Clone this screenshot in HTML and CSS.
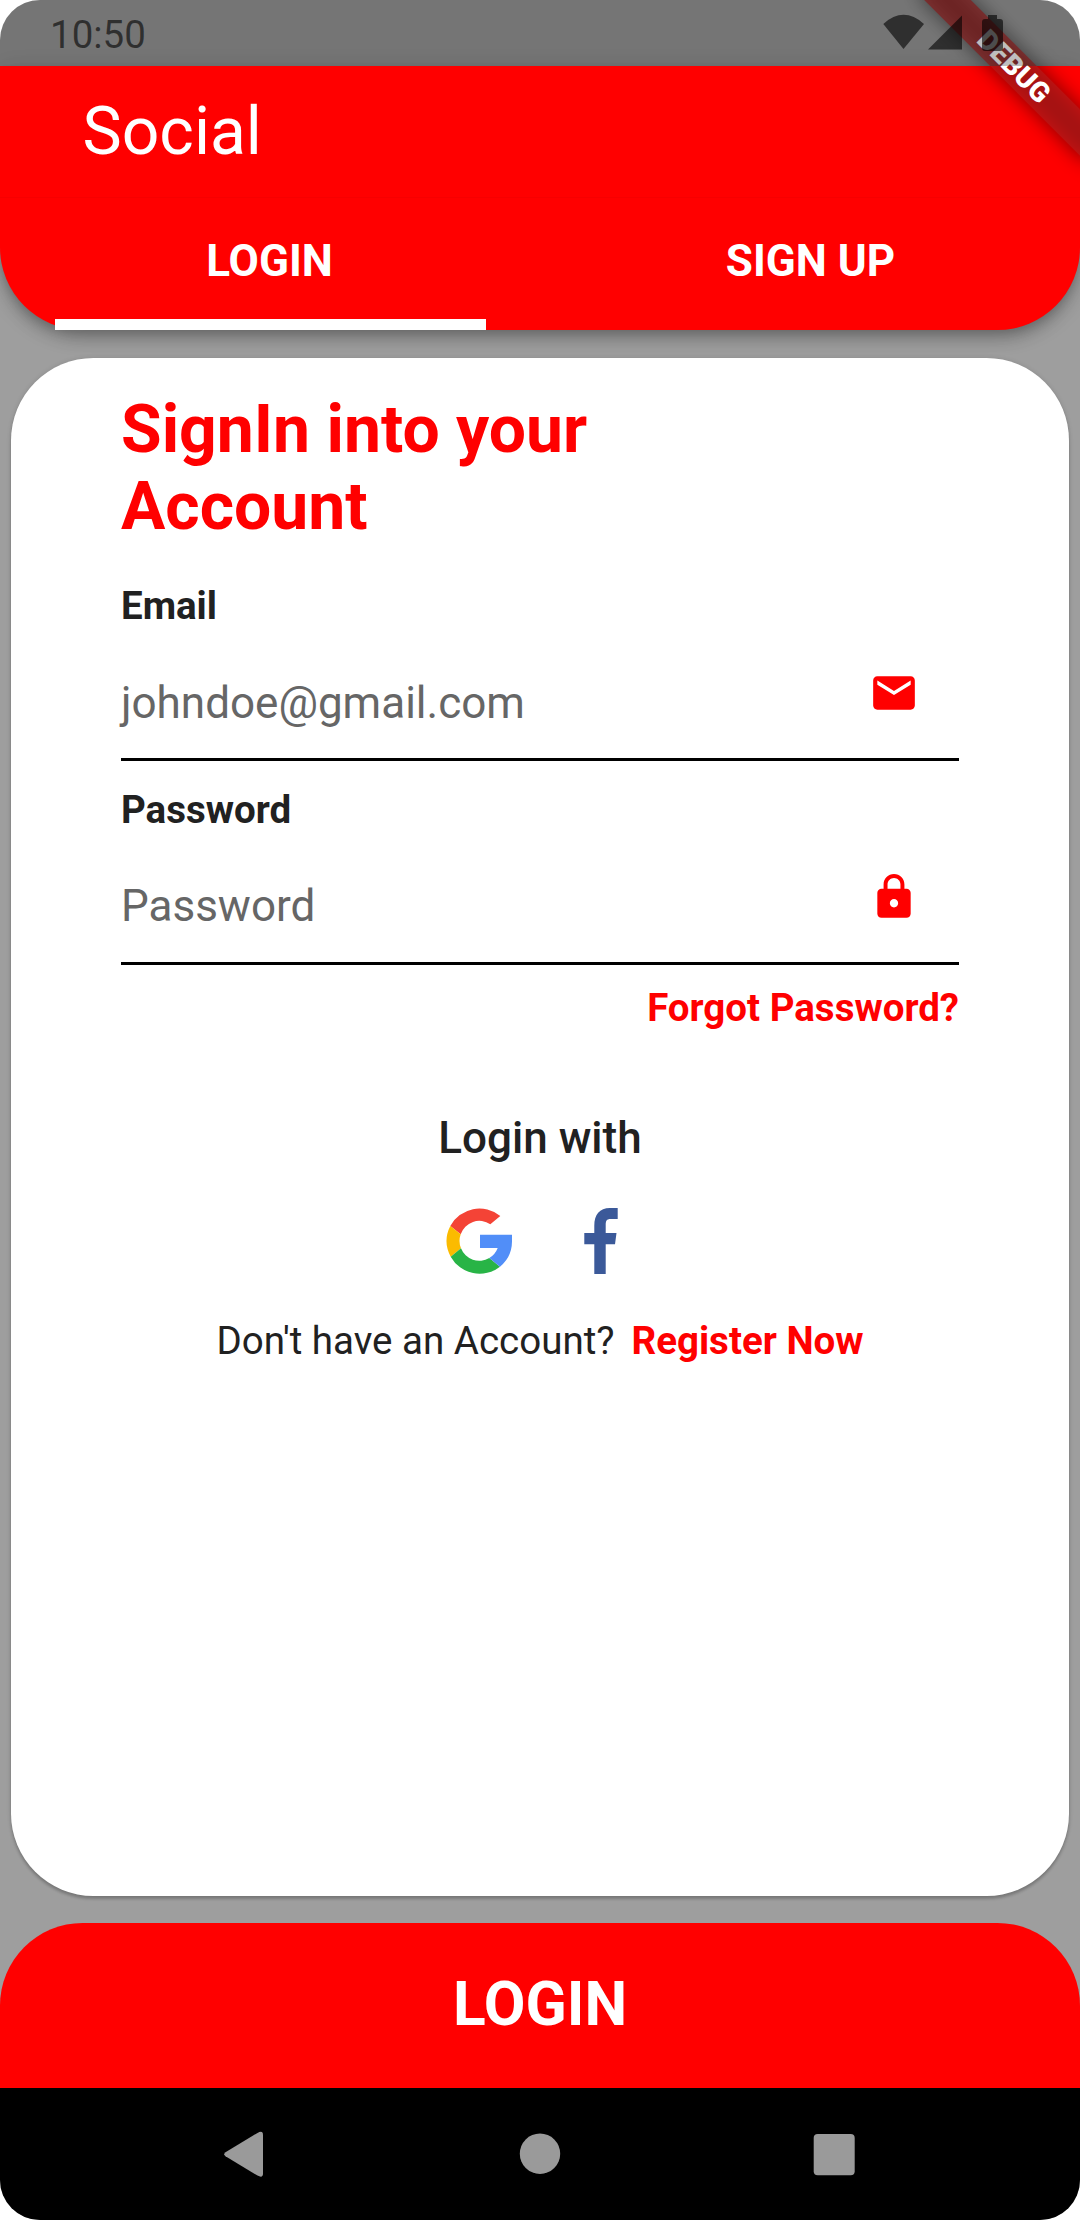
FILE: index.html
```html
<!DOCTYPE html>
<html lang="en">
<head>
<meta charset="utf-8">
<title>Social</title>
<link rel="stylesheet" href="styles.css">
</head>
<body>
<div class="device">
  <header class="app-bar">
    <h1 class="app-title">Social</h1>
    <nav class="tabs">
      <a class="tab tab-active"><span>LOGIN</span></a>
      <a class="tab"><span>SIGN UP</span></a>
    </nav>
  </header>

  <main class="card">
    <h2 class="heading">SignIn into your<br>Account</h2>

    <label class="label">Email</label>
    <div class="field">
      <span class="hint">johndoe@gmail.com</span>
      <svg class="field-icon" viewBox="0 0 24 24"><path d="M20 4H4c-1.1 0-2 .9-2 2v12c0 1.1.9 2 2 2h16c1.1 0 2-.9 2-2V6c0-1.1-.9-2-2-2zm0 4l-8 5-8-5V6l8 5 8-5v2z"/></svg>
    </div>

    <label class="label label-password">Password</label>
    <div class="field">
      <span class="hint hint-password">Password</span>
      <svg class="field-icon" viewBox="0 0 24 24"><path d="M18 8h-1V6c0-2.760-2.240-5-5-5S7 3.240 7 6v2H6c-1.100 0-2 .9-2 2v10c0 1.100.9 2 2 2h12c1.100 0 2-.9 2-2V10c0-1.100-.9-2-2-2zm-6 9c-1.100 0-2-.9-2-2s.9-2 2-2 2 .9 2 2-.9 2-2 2zm3.100-9H8.900V6c0-1.710 1.390-3.100 3.100-3.100s3.100 1.390 3.100 3.100v2z"/></svg>
    </div>
    <a class="forgot">Forgot Password?</a>

    <p class="login-with">Login with</p>
    <div class="socials">
      <svg class="social" viewBox="0 0 66 66">
        <path fill="#f44336" d="M54.300 8A33 33 0 0 0 4.300 18L14.700 26.300A19.500 19.500 0 0 1 44.300 16.300Z"/>
        <path fill="#fbbb00" d="M4.300 18A33 33 0 0 0 4.700 48.700L15 40.300A19.500 19.500 0 0 1 14.700 26.300Z"/>
        <path fill="#28b446" d="M4.700 48.700A33 33 0 0 0 54 58.700L43.300 50A19.500 19.500 0 0 1 15 40.300Z"/>
        <path fill="#518ef8" d="M54 58.700A33 33 0 0 0 66 33V26.800H34V40H51.700A19.500 19.500 0 0 1 43.300 50Z"/>
      </svg>
      <svg class="social" viewBox="0 0 66 66">
        <path fill="#3b5999" d="M26.300 66V36.300H16.300V25H26.300V17.500C26.300 7 31.500 0 42 0H49.700V11H42.500C38.500 11 37.700 13 37.700 17V25H48.500L47 36.300H37.700V66Z"/>
      </svg>
    </div>
    <p class="register"><span>Don't have an Account?</span><a class="register-link">Register Now</a></p>
  </main>

  <button class="submit">LOGIN</button>

  <footer class="system-nav">
    <svg class="nav-icon" viewBox="0 0 48 48"><path d="M3.500 22.200L35.500 2.900Q41 0 41 5V43.500Q41 48.500 35.500 45.600L3.500 26.200Q1 24.200 3.500 22.200Z"/></svg>
    <svg class="nav-icon" viewBox="0 0 48 48"><circle cx="24" cy="23.700" r="20.200"/></svg>
    <svg class="nav-icon" viewBox="0 0 48 48"><rect x="3.700" y="4" width="41" height="41.300" rx="4"/></svg>
  </footer>

  <div class="debug-clip"><div class="debug-banner">DEBUG</div></div>

  <div class="status-bar">
    <span class="clock">10:50</span>
    <svg class="status-icons" viewBox="0 0 124 38">
      <path d="M.3 10Q20.500-8.300 41 10L20.500 35Z"/>
      <path d="M45 35.500L79 1.500V35.500Z"/>
      <path d="M105 1h9v4h3q3 0 3 3v26q0 3-3 3h-15q-3 0-3-3v-26q0-3 3-3h3z"/>
    </svg>
  </div>
</div>
</body>
</html>
```
FILE: styles.css
```css
* {
  box-sizing: border-box;
  margin: 0;
  padding: 0;
}

body {
  background: #fff;
  font-family: Roboto, "Liberation Sans", sans-serif;
  color: #212121;
}

.device {
  position: relative;
  display: flex;
  flex-direction: column;
  width: 1080px;
  height: 2220px;
  padding-top: 66px;
  overflow: hidden;
  border-radius: 40px;
  background: #9e9e9e;
}

/* App bar */
.app-bar {
  display: flex;
  flex-direction: column;
  height: 264px;
  background: #f00;
  border-radius: 0 0 82.5px 82.5px;
  box-shadow: 0 5px 11px -3px rgba(0, 0, 0, .2), 0 11px 14px rgba(0, 0, 0, .14), 0 3px 27px rgba(0, 0, 0, .12);
  color: #fff;
}

.app-title {
  height: 131px;
  padding: 27px 0 0 82.5px;
  font-size: 66px;
  line-height: 77px;
  font-weight: 400;
}

.tabs {
  display: flex;
  flex: 1;
  border-top: 1px solid rgba(0, 0, 0, .03);
}

.tab {
  display: flex;
  flex: 1;
  justify-content: center;
  margin: 0 55px;
  padding-top: 37px;
  font-size: 44px;
  line-height: 52px;
  font-weight: 700;
}

.tab-active {
  padding-right: 2px;
  border-bottom: 11px solid #fff;
}

/* Form card */
.card {
  display: flex;
  flex-direction: column;
  height: 1538px;
  margin: 28px 11px 0;
  padding: 33px 110px 0;
  background: #fff;
  border-radius: 82.5px;
  box-shadow: 0 3px 3px rgba(0, 0, 0, .2), 0 0 5px rgba(0, 0, 0, .12);
}

.heading {
  height: 154px;
  font-size: 66px;
  line-height: 77px;
  font-weight: 700;
  color: #f00;
}

.label {
  margin-top: 38px;
  font-size: 38.5px;
  line-height: 45px;
  font-weight: 700;
}

.label-password {
  margin-top: 26px;
}

.field {
  display: flex;
  justify-content: space-between;
  align-items: flex-start;
  height: 133px;
  padding: 40px 40px 0 0;
  border-bottom: 3px solid #000;
}

.hint {
  margin-top: 9px;
  font-size: 44px;
  line-height: 52px;
  color: #666;
}

.hint-password {
  margin-top: 8px;
}

.field-icon {
  width: 50px;
  height: 50px;
  fill: #f00;
}

.forgot {
  align-self: flex-end;
  margin: 20px 0 0;
  font-size: 38.5px;
  line-height: 45px;
  font-weight: 700;
  color: #f00;
}

.login-with {
  margin-top: 82px;
  font-size: 44px;
  line-height: 52px;
  font-weight: 500;
  text-align: center;
}

.socials {
  display: flex;
  justify-content: center;
  gap: 56px;
  margin-top: 44px;
}

.social {
  width: 66px;
  height: 66px;
}

.register {
  display: flex;
  justify-content: center;
  gap: 17px;
  margin-top: 44px;
  font-size: 38.5px;
  line-height: 45px;
}

.register-link {
  font-weight: 700;
  color: #f00;
}

/* Bottom action */
.submit {
  height: 165px;
  margin-top: 27px;
  padding-bottom: 2px;
  border: 0;
  border-radius: 82.5px 82.5px 0 0;
  background: #f00;
  color: #fff;
  font: 700 60.5px/71px Roboto, "Liberation Sans", sans-serif;
}

/* Android navigation */
.system-nav {
  display: flex;
  justify-content: center;
  align-items: flex-start;
  gap: 246px;
  height: 132px;
  padding-top: 42px;
  background: #000;
}

.nav-icon {
  width: 48px;
  height: 48px;
  fill: #9a9a9a;
}

/* Corner ribbon */
.debug-clip {
  position: absolute;
  top: 0;
  right: 0;
  width: 280px;
  height: 280px;
  overflow: hidden;
}

.debug-banner {
  position: absolute;
  top: 49.5px;
  left: 94px;
  width: 240px;
  height: 33px;
  transform: rotate(45deg);
  color: #fff;
  font-size: 28px;
  line-height: 33px;
  font-weight: 900;
  text-align: center;
}

.debug-banner::before,
.debug-banner::after {
  content: "";
  position: absolute;
  inset: 0;
  z-index: -1;
}

/* The shadow also darkens the translucent ribbon above it */
.debug-banner::before {
  background: rgba(0, 0, 0, .5);
  filter: blur(10px);
}

.debug-banner::after {
  background: rgba(183, 28, 28, .63);
}

/* Android status bar scrim */
.status-bar {
  position: absolute;
  inset: 0 0 auto 0;
  display: flex;
  justify-content: space-between;
  height: 66px;
  padding: 12px 73px 0 50px;
  background: rgba(0, 0, 0, .255);
  color: rgba(0, 0, 0, .6);
}

.clock {
  font-size: 38.5px;
  line-height: 45px;
}

.status-icons {
  width: 124px;
  height: 38px;
  margin-top: 2px;
  fill: rgba(0, 0, 0, .6);
}
```
